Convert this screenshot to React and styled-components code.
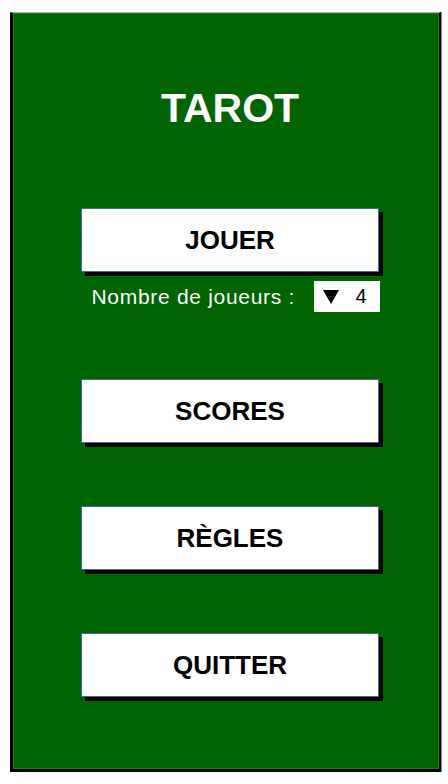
import React, { useState } from 'react'
import styled, { createGlobalStyle } from 'styled-components'

const GlobalStyle = createGlobalStyle`
  body {
    margin: 0;
    background: #ffffff;
    font-family: "Liberation Sans", Arial, sans-serif;
  }
`

const Frame = styled.div`
  box-sizing: border-box;
  width: 431px;
  height: 760px;
  margin: 12px 0 0 10px;
  background: #006400;
  border-top: 1px solid #a8a8a8;
  border-left: 3px solid #000;
  border-right: 2px solid #000;
  border-bottom: 3px solid #000;
  box-shadow: 1px 0 0 #8a8a8a, inset 0 0 0 1px #1e7a1e;
  padding: 75px 0 0 8px;
  display: flex;
  flex-direction: column;
  align-items: center;
`

const Title = styled.h1`
  margin: 0 0 79px;
  font-size: 41px;
  line-height: 1;
  font-weight: bold;
  color: #fff;
`

const MenuButton = styled.button`
  box-sizing: border-box;
  width: 298px;
  height: 64px;
  margin-top: ${p => p.$gap || 0}px;
  background: #fff;
  border: 1px solid #46698f;
  box-shadow: 4px 4px 0 #000;
  font-family: inherit;
  font-size: 26px;
  font-weight: bold;
  color: #000;
  display: flex;
  align-items: center;
  justify-content: center;
  cursor: pointer;
  padding: 0;
`

const PlayersRow = styled.div`
  box-sizing: border-box;
  width: 299px;
  margin-top: 9px;
  padding-left: 11px;
  display: flex;
  align-items: center;
  justify-content: space-between;
`

const Label = styled.span`
  color: #fff;
  font-size: 21px;
  letter-spacing: 0.7px;
`

const Select = styled.div`
  box-sizing: border-box;
  width: 66px;
  height: 31px;
  background: #fff;
  display: flex;
  align-items: center;
  padding-left: 9px;
  gap: 17px;
  font-size: 20px;
  color: #000;
  cursor: pointer;
`

const Arrow = styled.svg`
  width: 16px;
  height: 14px;
  display: block;
`

export default function App() {
  const [players, setPlayers] = useState(4)

  return (
    <>
      <GlobalStyle />
      <Frame>
        <Title>TAROT</Title>
        <MenuButton>JOUER</MenuButton>
        <PlayersRow>
          <Label>Nombre de joueurs :</Label>
          <Select onClick={() => setPlayers(players === 5 ? 3 : players + 1)}>
            <Arrow viewBox="0 0 16 14">
              <polygon points="0,0 16,0 8,14" fill="#000" />
            </Arrow>
            <span>{players}</span>
          </Select>
        </PlayersRow>
        <MenuButton $gap={67}>SCORES</MenuButton>
        <MenuButton $gap={63}>RÈGLES</MenuButton>
        <MenuButton $gap={63}>QUITTER</MenuButton>
      </Frame>
    </>
  )
}
